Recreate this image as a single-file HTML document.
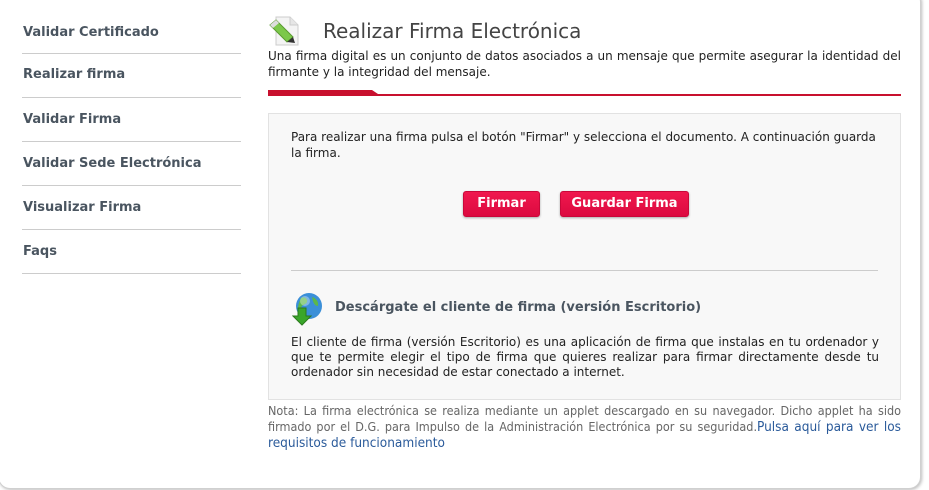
<!DOCTYPE html>
<html><head><meta charset="utf-8"><style>
*{margin:0;padding:0;box-sizing:border-box}
body{width:929px;height:490px;background:#fff;font-family:"DejaVu Sans","Liberation Sans",sans-serif;position:relative;overflow:hidden}
.wrap{position:absolute;left:-2px;top:-10px;width:923px;height:499px;border:1px solid #d0d0d0;border-radius:12px;box-shadow:1px 1px 3px #bbb;background:#fff}
.side{position:absolute;left:22px;top:9px;width:219px}
.side div{height:44px;border-bottom:1px solid #ccc;font-weight:bold;font-size:13px;color:#4a5560;padding-left:1px;line-height:44px}
.side div:first-child{height:45px;line-height:48px}
.side div:nth-child(2){line-height:42px}
.abs{position:absolute}
h1{position:absolute;left:323px;top:19px;font-weight:normal;font-size:20px;color:#444}
.desc{left:268px;top:48px;width:633px;font-size:12px;line-height:16px;color:#222;text-align:justify}
.bar1{left:268px;top:90px;width:104px;height:5px;background:#c8102e}
.bar1:after{content:"";position:absolute;right:-6px;top:0;border-left:6px solid #c8102e;border-top:4px solid transparent;border-bottom:0}
.bar2{left:268px;top:94px;width:633px;height:2px;background:#c8102e}
.box{left:268px;top:113px;width:633px;height:287px;background:#f8f8f8;border:1px solid #e2e2e2}
.t{font-size:12px;line-height:16px;color:#222}
.btn{position:absolute;top:191px;height:26px;background:linear-gradient(#f0184e,#dc0a40);border:1px solid #c9083a;border-radius:3px;color:#fff;font-weight:bold;font-size:13px;line-height:24px;text-align:center;box-shadow:0 1px 2px #aaa}
.note{left:268px;top:403px;width:633px;font-family:"DejaVu Sans Condensed","DejaVu Sans",sans-serif;font-stretch:condensed;font-size:12.5px;line-height:16px;color:#666;text-align:justify}
.note a{color:#2a5a9a;text-decoration:none;font-size:13.5px}
</style></head><body>
<div class="wrap"></div>
<div class="side">
<div>Validar Certificado</div><div>Realizar firma</div><div>Validar Firma</div><div>Validar Sede Electrónica</div><div>Visualizar Firma</div><div>Faqs</div>
</div>
<svg class="abs" style="left:268px;top:15px" width="34" height="32" viewBox="0 0 34 32">
<path d="M8 2h14l8 8v20H8z" fill="#f4f4f4" stroke="#ccc"/>
<path d="M22 2v8h8" fill="#e6e6e6" stroke="#ccc"/>
<path d="M2 10l6-5 17 17-6 5z" fill="#7cc84a" stroke="#5a9a30"/>
<path d="M2 10l6-5 3 3-6 5z" fill="#ddd"/>
<path d="M19 27l6-5 2 6z" fill="#333"/>
</svg>
<h1>Realizar Firma Electrónica</h1>
<div class="abs desc">Una firma digital es un conjunto de datos asociados a un mensaje que permite asegurar la identidad del firmante y la integridad del mensaje.</div>
<div class="abs bar2"></div><div class="abs bar1"></div>
<div class="abs box"></div>
<div class="abs t" style="left:291px;top:129px;width:588px">Para realizar una firma pulsa el botón "Firmar" y selecciona el documento. A continuación guarda la firma.</div>
<div class="btn" style="left:463px;width:77px">Firmar</div>
<div class="btn" style="left:560px;width:129px">Guardar Firma</div>
<div class="abs" style="left:291px;top:270px;width:587px;height:1px;background:#ccc"></div>
<svg class="abs" style="left:292px;top:292px" width="32" height="34" viewBox="0 0 32 34">
<circle cx="17" cy="14" r="13" fill="#3b8fd8"/>
<path d="M9 6c4-2 7 1 6 4s-5 2-6 6 3 6 1 8c-4-2-6-8-1-18zM20 5c4 1 7 5 6 9-3 0-5-3-6-9z" fill="#5cb84a"/>
<circle cx="13" cy="9" r="5" fill="#fff" opacity=".35"/>
<path d="M6 16h8v8h5l-9 9-9-9h5z" fill="#3aa62a" stroke="#2a7a1c"/>
</svg>
<div class="abs" style="left:335px;top:300px;font-weight:bold;font-size:13px;color:#4a5560">Descárgate el cliente de firma (versión Escritorio)</div>
<div class="abs t" style="left:291px;top:335px;width:588px;line-height:15px;text-align:justify">El cliente de firma (versión Escritorio) es una aplicación de firma que instalas en tu ordenador y que te permite elegir el tipo de firma que quieres realizar para firmar directamente desde tu ordenador sin necesidad de estar conectado a internet.</div>
<div class="abs note">Nota: La firma electrónica se realiza mediante un applet descargado en su navegador. Dicho applet ha sido firmado por el D.G. para Impulso de la Administración Electrónica por su seguridad.<a>Pulsa aquí para ver los requisitos de funcionamiento</a></div>
</body></html>
